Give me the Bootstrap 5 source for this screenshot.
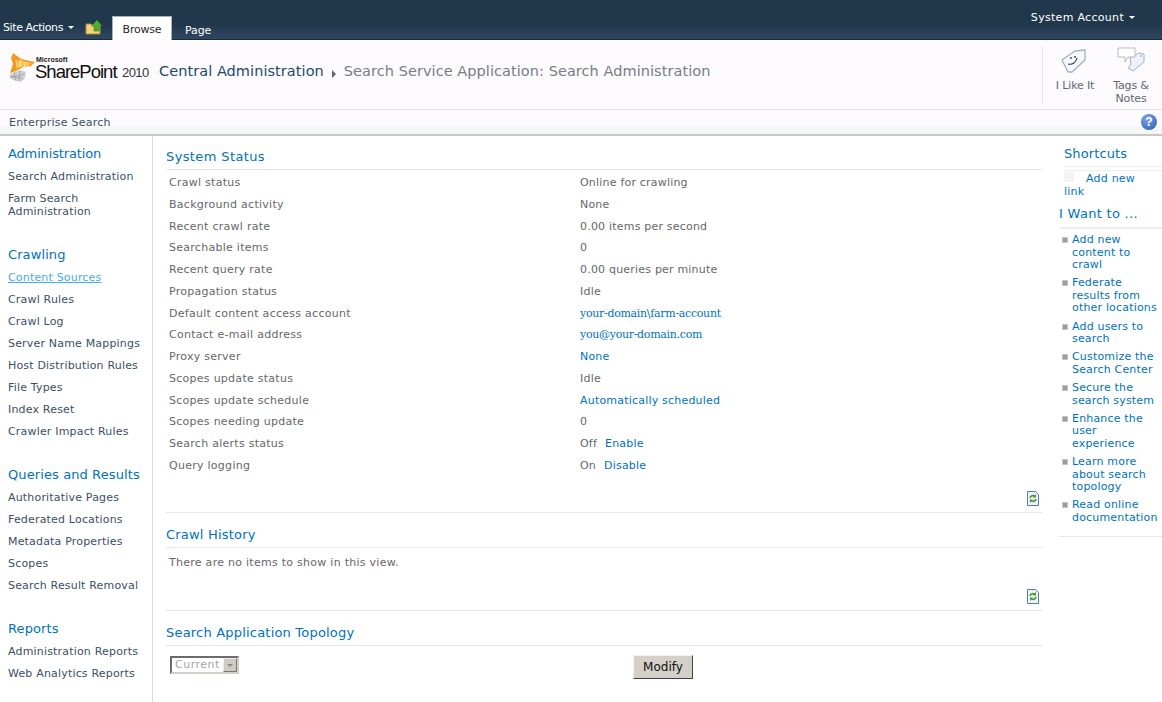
<!DOCTYPE html>
<html lang="en">

<head>
  <meta charset="UTF-8">
  <title>Search Administration</title>
  <link href="https://cdn.jsdelivr.net/npm/bootstrap@5.3.0/dist/css/bootstrap.min.css" rel="stylesheet">
  <style>
    html, body { height: 702px; overflow: hidden; }
    body { font-family: "DejaVu Sans", Verdana, sans-serif; font-size: 11px; color: #3b4f65; background: #fff; line-height: 13px; }
    a { color: #0072bc; text-decoration: none; }

    .sp-top { height: 40px; background: linear-gradient(#21374c 0, #21374c 24px, #2f4760 39px); border-bottom: 1px solid #1c2b3b; color: #fff; }
    .sp-actions { padding-left: 3px; padding-bottom: 5px; width: 85px; letter-spacing: -.4px; }
    .sp-caret { display: inline-block; border: 3px solid transparent; border-top: 3px solid #fff; border-bottom: 0; margin-left: 5px; vertical-align: 2px; }
    .sp-up { width: 18px; height: 16px; margin-bottom: 4px; margin-right: 9px; }
    .sp-tab { color: #fff; height: 22px; padding: 7px 13px 0; letter-spacing: -.1px; }
    .sp-tab-on { height: 24px; background: #fff; color: #23272c; border: 1px solid #a9b2ba; border-bottom: 0; padding: 6px 0 0; width: 60px; margin-bottom: -1px; letter-spacing: -.2px; }
    .sp-user { padding: 11px 27px 0 0; letter-spacing: .3px; }

    .sp-title { height: 70px; background: #fdfbfd; border-bottom: 1px solid #e2e2e4; }
    .sp-logo { width: 152px; height: 44px; margin: 9px 0 0 7px; position: relative; flex: none; }
    .sp-logo svg { width: 30px; height: 31px; position: absolute; left: 1px; top: 3px; }
    .sp-ms { position: absolute; left: 29px; top: 7px; font: 700 7px/8px "Liberation Sans", sans-serif; color: #222; }
    .sp-name { position: absolute; left: 28px; top: 15px; font: 18.5px/15px "Liberation Sans", sans-serif; letter-spacing: -1px; color: #111; }
    .sp-year { position: absolute; left: 115px; top: 16px; font: 13px/16px "Liberation Sans", sans-serif; letter-spacing: -.6px; color: #333; }
    .sp-crumb { font-size: 14.5px; line-height: 20px; padding-top: 21px; color: #767e87; white-space: nowrap; letter-spacing: .06px; }
    .sp-crumb-root { color: #1a4a70; }
    .sp-crumb-arrow { display: inline-block; border: 4px solid transparent; border-left: 4px solid #5c6670; border-right: 0; margin: 0 8px 0 8px; vertical-align: -2px; }
    .sp-social { width: 120px; margin: 7px 0 5px; border-left: 1px solid #e6e6e8; color: #5e6873; text-align: center; line-height: 13px; letter-spacing: -.15px; }
    .sp-social-item { width: 56px; }
    .sp-social-item svg { display: block; margin: 0 auto 4px; width: 30px; height: 28px; }

    .sp-sub { height: 26px; background: linear-gradient(#fdfbfd 0, #fdfbfd 16px, #f5f6f6 17px); border-bottom: 2px solid #c6c7c9; padding: 6px 5px 0 9px; letter-spacing: .22px; }
    .sp-help { width: 16px; height: 16px; border-radius: 50%; background: radial-gradient(circle at 40% 30%, #7fa6e8, #2457b5); color: #fff; font: 700 12px/16px "Liberation Sans", sans-serif; text-align: center; margin-top: -2px; }

    .sp-body { height: 566px; }
    .sp-left { width: 153px; border-right: 1px solid #dcdcdc; padding: 10px 0 0 8px; flex: none; }
    .sp-head { font-size: 13px; line-height: 15px; color: #0072bc; letter-spacing: .1px; }
    .sp-left a { display: block; color: #3b4f65; letter-spacing: .18px; margin-top: 9px; }
    .sp-left a.sp-current { color: #44aaee; text-decoration: underline; }
    .sp-left .sp-head { margin-top: 29px; }
    .sp-left .sp-head:first-child { margin-top: 0; letter-spacing: -.15px; }

    .sp-main { width: 876px; margin-left: 13px; flex: none; padding-top: 13px; }
    .sp-section-title { font-size: 13px; line-height: 15px; color: #0072bc; letter-spacing: .38px; padding-bottom: 5px; border-bottom: 1px solid #e6e7e8; }
    .sp-section-next { margin-top: 14px; letter-spacing: .2px; }
    .sp-status { padding: 6px 0 0 3px; color: #676767; letter-spacing: .2px; }
    .sp-status > div { height: 21.77px; }
    .sp-key { width: 411px; flex: none; letter-spacing: .27px; }
    .sp-status a { letter-spacing: .2px; }
    .sp-status a.sp-serif { font-family: "DejaVu Serif", serif; letter-spacing: -.3px; }
    .sp-empty { height: 31px; padding-top: 8px; letter-spacing: .27px; }
    .sp-refresh { height: 32px; padding: 10px 3px 0 0; text-align: right; border-bottom: 1px solid #e6e7e8; }
    .sp-refresh svg { width: 12px; height: 15px; display: inline-block; vertical-align: top; }

    .sp-right { width: 103px; margin-left: 17px; flex: none; padding-top: 10px; }
    .sp-right-pad { padding: 0 8px 0 5px; }
    .sp-right-head { border-bottom: 1px solid #eceded; padding-bottom: 5px; margin-right: -8px; }
    .sp-rule { border-top: 1px solid #eceded; margin: 3px -8px 0 0; }
    .sp-addlink { padding-top: 1px; }
    .sp-addlink a { letter-spacing: .22px; }
    .sp-addlink i { display: inline-block; width: 10px; height: 10px; background: #f4f4f6; margin-right: 12px; }
    .sp-want { border-bottom: 2px solid #eceded; letter-spacing: .3px; padding-bottom: 6px; margin-top: 8px; }
    .sp-links { list-style: none; padding: 5px 0 6px 13px; margin: 0; border-bottom: 1px solid #e6e7e8; }
    .sp-links li { position: relative; margin-bottom: 5.5px; line-height: 12.6px; letter-spacing: .18px; }
    .sp-links li::before { content: ""; position: absolute; left: -10px; top: 3px; width: 6px; height: 6px; background: #9b9ea1; border: 1px solid #c3c4c6; }

    .sp-form { padding-top: 10px; }
    .sp-select { width: 69px; height: 18px; border: 2px solid; border-color: #6b6b6b #d4d0c8 #d4d0c8 #6b6b6b; color: #a5a5a5; padding-left: 3px; line-height: 14px; letter-spacing: .5px; margin: 0 394px 0 4px; background: #fff; position: relative; flex: none; }
    .sp-select span { position: absolute; right: 0; top: 0; width: 14px; height: 14px; background: #cfcbc4; border: 1px solid; border-color: #eee #777 #777 #eee; }
    .sp-select span::after { content: ""; position: absolute; left: 3px; top: 5px; border: 3px solid transparent; border-top: 3px solid #8a8a8a; border-bottom: 0; }
    .sp-btn { width: 60px; height: 24px; margin-top: -1px; background: #d4d0c8; border: 1px solid; border-color: #f2f2f2 #404040 #404040 #f2f2f2; color: #111; font: 12px/20px "DejaVu Sans", sans-serif; padding: 0; border-radius: 0; }
  </style>
</head>

<body>
  <!-- top bar -->
  <div class="sp-top d-flex align-items-end">
    <div class="sp-actions">Site Actions<i class="sp-caret"></i></div>
    <svg class="sp-up" viewBox="0 0 18 16">
      <path d="M1 5h5l1 1h8v9H1z" fill="#f3d27a" stroke="#a98a3a"/>
      <path d="M9 12V7H6.500L12 1l5 6h-3v5z" fill="#4caf2f" stroke="#2f7d1c" stroke-width=".6"/>
    </svg>
    <div class="sp-tab sp-tab-on text-center">Browse</div>
    <div class="sp-tab">Page</div>
    <div class="sp-user ms-auto align-self-start">System Account<i class="sp-caret"></i></div>
  </div>

  <!-- title row -->
  <div class="sp-title d-flex">
    <div class="sp-logo">
      <svg viewBox="0 0 30 31">
        <path d="M5 1l8 6 14 3-4 4-8 1-7 4-6 2 3-9-2-6z" fill="#f29a1e"/>
        <path d="M10 8l14 3-4 3-8 1-4 2z" fill="#fbc64a"/>
        <path d="M8 8l1 6M13 8l-1 7M18 10l-2 5" stroke="#fff" stroke-width=".7" fill="none"/>
        <path d="M4 21l8-3 6 2-1 6-4 4-8-2-4-4z" fill="#cdd0d4"/>
        <path d="M3 24l12 3M6 20l2 9M12 19l-1 10M2 26l14-4" stroke="#8d9196" stroke-width=".6" fill="none"/>
      </svg>
      <span class="sp-ms">Microsoft</span>
      <span class="sp-name">SharePoint</span>
      <span class="sp-year">2010</span>
    </div>
    <div class="sp-crumb"><span class="sp-crumb-root">Central Administration</span><i class="sp-crumb-arrow"></i>Search Service Application: Search Administration</div>
    <div class="sp-social ms-auto d-flex">
      <div class="sp-social-item ms-1">
        <svg viewBox="0 0 30 28">
          <path d="M2 13L15 4l10-1v10L12 25H8z" fill="#f6f8fb" stroke="#9eb0c8" stroke-width="1.300" stroke-linejoin="round"/>
          <path d="M11 10v2M15 9v2" stroke="#333" stroke-width="1.300"/>
          <path d="M8 17c4 1 8-1 9-6" stroke="#333" stroke-width="1.100" fill="none"/>
        </svg>
        I Like It
      </div>
      <div class="sp-social-item">
        <svg viewBox="0 0 30 28">
          <path d="M14 11l9-5 5 1 0 8-11 9-5-3 3-4z" fill="#eef2f7" stroke="#9eb0c8"/>
          <path d="M2 1h17v9h-7l-3 5v-5H2z" fill="#fff" stroke="#b4bcc6" stroke-linejoin="round"/>
          <circle cx="25" cy="9" r="1" fill="#9eb0c8"/>
        </svg>
        Tags &amp;<br>Notes
      </div>
    </div>
  </div>

  <div class="sp-sub d-flex justify-content-between">
    <span>Enterprise Search</span>
    <div class="sp-help">?</div>
  </div>

  <div class="sp-body d-flex">
    <!-- left nav -->
    <nav class="sp-left">
      <div class="sp-head">Administration</div>
      <a href="#">Search Administration</a>
      <a href="#">Farm Search Administration</a>
      <div class="sp-head">Crawling</div>
      <a href="#" class="sp-current">Content Sources</a>
      <a href="#">Crawl Rules</a>
      <a href="#">Crawl Log</a>
      <a href="#">Server Name Mappings</a>
      <a href="#">Host Distribution Rules</a>
      <a href="#">File Types</a>
      <a href="#">Index Reset</a>
      <a href="#">Crawler Impact Rules</a>
      <div class="sp-head">Queries and Results</div>
      <a href="#">Authoritative Pages</a>
      <a href="#">Federated Locations</a>
      <a href="#">Metadata Properties</a>
      <a href="#">Scopes</a>
      <a href="#">Search Result Removal</a>
      <div class="sp-head">Reports</div>
      <a href="#">Administration Reports</a>
      <a href="#">Web Analytics Reports</a>
    </nav>

    <!-- main -->
    <main class="sp-main">
      <div class="sp-section-title">System Status</div>
      <div class="sp-status">
        <div class="d-flex"><span class="sp-key">Crawl status</span><span>Online for crawling</span></div>
        <div class="d-flex"><span class="sp-key">Background activity</span><span>None</span></div>
        <div class="d-flex"><span class="sp-key">Recent crawl rate</span><span>0.00 items per second</span></div>
        <div class="d-flex"><span class="sp-key">Searchable items</span><span>0</span></div>
        <div class="d-flex"><span class="sp-key">Recent query rate</span><span>0.00 queries per minute</span></div>
        <div class="d-flex"><span class="sp-key">Propagation status</span><span>Idle</span></div>
        <div class="d-flex"><span class="sp-key">Default content access account</span><a href="#" class="sp-serif">your-domain\farm-account</a></div>
        <div class="d-flex"><span class="sp-key">Contact e-mail address</span><a href="#" class="sp-serif">you@your-domain.com</a></div>
        <div class="d-flex"><span class="sp-key">Proxy server</span><a href="#">None</a></div>
        <div class="d-flex"><span class="sp-key">Scopes update status</span><span>Idle</span></div>
        <div class="d-flex"><span class="sp-key">Scopes update schedule</span><a href="#">Automatically scheduled</a></div>
        <div class="d-flex"><span class="sp-key">Scopes needing update</span><span>0</span></div>
        <div class="d-flex"><span class="sp-key">Search alerts status</span><span>Off</span><a href="#" class="ms-2">Enable</a></div>
        <div class="d-flex"><span class="sp-key">Query logging</span><span>On</span><a href="#" class="ms-2">Disable</a></div>
      </div>
      <div class="sp-refresh">
        <svg viewBox="0 0 12 15"><path d="M.5.500h8l3 3v11H.5z" fill="#eef3fa" stroke="#5a78a5"/><path d="M3 7a3 3 0 015-1.500M9 8a3 3 0 01-5 1.500" stroke="#3f9a2c" stroke-width="1.600" fill="none"/><path d="M9 3v3.500H6M3 12V8.500h3" fill="#3f9a2c"/></svg>
      </div>

      <div class="sp-section-title sp-section-next">Crawl History</div>
      <div class="sp-status sp-empty">There are no items to show in this view.</div>
      <div class="sp-refresh">
        <svg viewBox="0 0 12 15"><path d="M.5.500h8l3 3v11H.5z" fill="#eef3fa" stroke="#5a78a5"/><path d="M3 7a3 3 0 015-1.500M9 8a3 3 0 01-5 1.500" stroke="#3f9a2c" stroke-width="1.600" fill="none"/><path d="M9 3v3.500H6M3 12V8.500h3" fill="#3f9a2c"/></svg>
      </div>

      <div class="sp-section-title sp-section-next">Search Application Topology</div>
      <div class="d-flex sp-form">
        <div class="sp-select">Current<span></span></div>
        <button type="button" class="btn sp-btn">Modify</button>
      </div>
    </main>

    <!-- right column -->
    <aside class="sp-right">
      <div class="sp-right-pad">
        <div class="sp-head sp-right-head">Shortcuts</div>
        <div class="sp-rule"></div>
        <div class="sp-addlink"><i></i><a href="#">Add new link</a></div>
      </div>
      <div class="sp-head sp-want">I Want to ...</div>
      <ul class="sp-links">
        <li><a href="#">Add new content to crawl</a></li>
        <li><a href="#">Federate results from other locations</a></li>
        <li><a href="#">Add users to search</a></li>
        <li><a href="#">Customize the Search Center</a></li>
        <li><a href="#">Secure the search system</a></li>
        <li><a href="#">Enhance the user experience</a></li>
        <li><a href="#">Learn more about search topology</a></li>
        <li><a href="#">Read online documentation</a></li>
      </ul>
    </aside>
  </div>

  <script src="https://cdn.jsdelivr.net/npm/bootstrap@5.3.0/dist/js/bootstrap.bundle.min.js"></script>
</body>
</html>
